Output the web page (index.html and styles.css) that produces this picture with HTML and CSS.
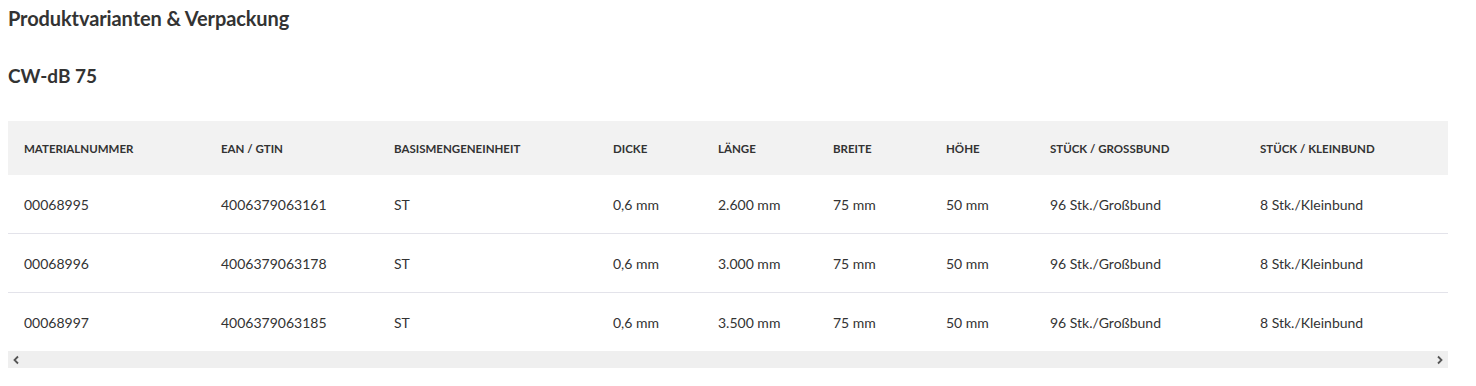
FILE: index.html
```html
<!DOCTYPE html>
<html lang="de">
<head>
<meta charset="utf-8">
<title>Produktvarianten &amp; Verpackung</title>
<link rel="stylesheet" href="styles.css">
</head>
<body>
<section class="variants">
  <h2 class="section-title">Produktvarianten &amp; Verpackung</h2>
  <h3 class="product-title">CW-dB 75</h3>
  <div class="table-scroll">
    <table class="variant-table">
      <colgroup>
        <col class="c1"><col class="c2"><col class="c3"><col class="c4"><col class="c5"><col class="c6"><col class="c7"><col class="c8"><col class="c9">
      </colgroup>
      <thead>
        <tr>
          <th>Materialnummer</th>
          <th>EAN / GTIN</th>
          <th>Basismengeneinheit</th>
          <th>Dicke</th>
          <th>Länge</th>
          <th>Breite</th>
          <th>Höhe</th>
          <th>Stück / Grossbund</th>
          <th>Stück / Kleinbund</th>
        </tr>
      </thead>
      <tbody>
        <tr>
          <td>00068995</td><td>4006379063161</td><td>ST</td><td>0,6 mm</td><td>2.600 mm</td><td>75 mm</td><td>50 mm</td><td>96 Stk./Großbund</td><td>8 Stk./Kleinbund</td>
        </tr>
        <tr>
          <td>00068996</td><td>4006379063178</td><td>ST</td><td>0,6 mm</td><td>3.000 mm</td><td>75 mm</td><td>50 mm</td><td>96 Stk./Großbund</td><td>8 Stk./Kleinbund</td>
        </tr>
        <tr>
          <td>00068997</td><td>4006379063185</td><td>ST</td><td>0,6 mm</td><td>3.500 mm</td><td>75 mm</td><td>50 mm</td><td>96 Stk./Großbund</td><td>8 Stk./Kleinbund</td>
        </tr>
      </tbody>
    </table>
  </div>
  <div class="scrollbar" aria-hidden="true">
    <svg class="arrow" width="8" height="10" viewBox="0 0 8 10"><path d="M6 1.5 L2.5 5 L6 8.5" fill="none" stroke="#555" stroke-width="1.8"/></svg>
    <svg class="arrow" width="8" height="10" viewBox="0 0 8 10"><path d="M2 1.5 L5.5 5 L2 8.5" fill="none" stroke="#555" stroke-width="1.8"/></svg>
  </div>
</section>
</body>
</html>
```
FILE: styles.css
```css
html, body {
  background: #ffffff;
}
body {
  margin: 8px;
  font-family: Lato, "Open Sans", sans-serif;
  color: #333333;
}
.variants {
  width: 1440px;
}
.section-title {
  margin: 0;
  font-size: 20px;
  line-height: 20px;
  font-weight: 700;
  letter-spacing: -0.1px;
  color: #333333;
}
.product-title {
  margin: 38px 0 0 0;
  font-size: 19px;
  line-height: 20px;
  font-weight: 700;
  color: #333333;
}
.table-scroll {
  margin-top: 35px;
  width: 1440px;
  overflow: hidden;
}
.variant-table {
  width: 1440px;
  table-layout: fixed;
  border-collapse: collapse;
  border-spacing: 0;
}
.c1 { width: 197px; }
.c2 { width: 173px; }
.c3 { width: 219px; }
.c4 { width: 105px; }
.c5 { width: 115px; }
.c6 { width: 113px; }
.c7 { width: 104px; }
.c8 { width: 210px; }
.c9 { width: 204px; }
.variant-table thead tr {
  background: #f2f2f2;
}
.variant-table th {
  height: 54px;
  padding: 0 16px;
  text-align: left;
  font-size: 11.5px;
  font-weight: 700;
  text-transform: uppercase;
  color: #333333;
  vertical-align: middle;
  white-space: nowrap;
}
.variant-table td {
  height: 58px;
  padding: 0 16px;
  font-size: 14px;
  color: #333333;
  vertical-align: middle;
  white-space: nowrap;
  border-bottom: 1px solid #e3e3ea;
}
.variant-table tbody tr:last-child td {
  border-bottom: none;
}
.scrollbar {
  height: 17px;
  background: #efefef;
  display: flex;
  align-items: center;
  justify-content: space-between;
  padding: 0 4px;
}
.arrow {
  display: block;
}
```
